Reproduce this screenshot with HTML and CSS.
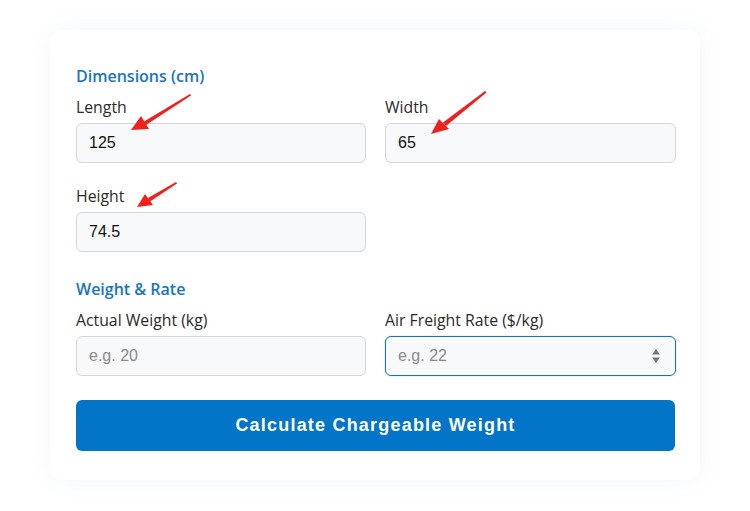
FILE: index.html
```html
<!DOCTYPE html>
<html lang="en">
<head>
<meta charset="utf-8">
<title>Chargeable Weight Calculator</title>
<link rel="stylesheet" href="styles.css">
</head>
<body>
<div class="page">
  <form class="card">
    <h3 class="section-title">Dimensions (cm)</h3>
    <div class="grid">
      <div class="field">
        <label class="label">Length</label>
        <input class="input" type="text" value="125">
      </div>
      <div class="field">
        <label class="label">Width</label>
        <input class="input" type="text" value="65">
      </div>
      <div class="field">
        <label class="label">Height</label>
        <input class="input" type="text" value="74.5">
      </div>
    </div>

    <h3 class="section-title section-gap">Weight &amp; Rate</h3>
    <div class="grid">
      <div class="field">
        <label class="label">Actual Weight (kg)</label>
        <input class="input" type="text" placeholder="e.g. 20">
      </div>
      <div class="field">
        <label class="label">Air Freight Rate ($/kg)</label>
        <div class="input-wrap">
          <input class="input input-focus" type="text" placeholder="e.g. 22">
          <svg class="spinner" width="10" height="18" viewBox="0 0 10 18">
            <path d="M5 2 L9 7.5 L1 7.5 Z" fill="#777"/>
            <path d="M5 16 L9 10.5 L1 10.5 Z" fill="#777"/>
          </svg>
        </div>
      </div>
    </div>

    <button class="btn" type="button">Calculate Chargeable Weight</button>
  </form>

  <svg class="annotations" width="750" height="511" viewBox="0 0 750 511">
    <g fill="#f0201c">
      <polygon points="190,94 191,95.5 146,125 144,121.5"/>
      <polygon points="131,130 141,116 149,129"/>
      <polygon points="485,91 486.5,92.5 446,126 443,122.5"/>
      <polygon points="431,134 439,119 449,129"/>
      <polygon points="176,182 177,183.5 150,201.5 148,198"/>
      <polygon points="137,207 145,194 153,205"/>
    </g>
  </svg>
</div>
</body>
</html>
```

FILE: styles.css
```css
* { box-sizing: border-box; }

html, body {
  margin: 0;
  padding: 0;
  background: #ffffff;
}

.page {
  position: relative;
  width: 750px;
  height: 511px;
  padding-top: 30px;
}

.card {
  width: 650px;
  margin: 0 auto;
  padding: 36px 25px 29px 26px;
  background: #ffffff;
  border-radius: 12px;
  box-shadow: 0 0 22px rgba(40, 130, 210, 0.07);
}

.section-title {
  margin: 0 0 11px;
  font-family: "Open Sans", "Noto Sans", sans-serif;
  font-size: 16px;
  line-height: 20px;
  font-weight: 600;
  color: #1a74c0;
}

.section-gap {
  margin-top: 27px;
}

.grid {
  display: grid;
  grid-template-columns: 290px 291px;
  column-gap: 19px;
  row-gap: 23px;
}

.field {
  display: flex;
  flex-direction: column;
}

.label {
  font-family: "Open Sans", "Noto Sans", sans-serif;
  font-size: 15.8px;
  line-height: 20px;
  font-weight: 500;
  color: #2b2b2b;
  margin-bottom: 6px;
}

.input {
  width: 100%;
  height: 40px;
  padding: 0 12px;
  border: 1px solid #d3d6da;
  border-radius: 6px;
  background: #f8f9fb;
  font-family: "Liberation Sans", Arial, sans-serif;
  font-size: 16px;
  color: #111111;
  outline: none;
}

.input::placeholder {
  color: #8a8a8a;
}

.input-focus {
  border-color: #1a6fb8;
  box-shadow: 0 0 0 1px rgba(26, 111, 184, 0.08);
}

.input-wrap {
  position: relative;
}

.spinner {
  position: absolute;
  right: 15px;
  top: 11px;
}

.btn {
  display: block;
  width: 100%;
  height: 51px;
  margin-top: 24px;
  border: none;
  border-radius: 6px;
  background: #0275c9;
  color: #ffffff;
  font-family: "Liberation Sans", Arial, sans-serif;
  font-size: 18px;
  font-weight: bold;
  letter-spacing: 1.2px;
}

.annotations {
  position: absolute;
  left: 0;
  top: 0;
  pointer-events: none;
}
```
